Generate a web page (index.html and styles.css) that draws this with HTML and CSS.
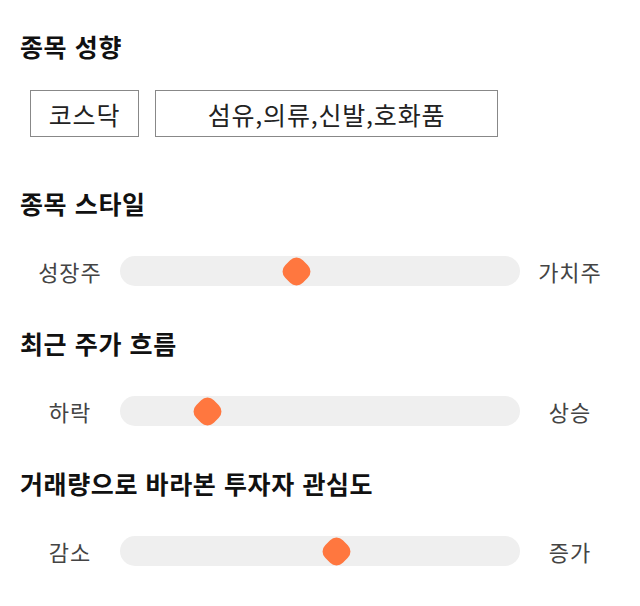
FILE: index.html
```html
<!DOCTYPE html>
<html lang="ko">
<head>
<meta charset="utf-8">
<link rel="stylesheet" href="styles.css">
</head>
<body>
<div class="page">
  <h2 class="title">종목 성향</h2>
  <div class="tags">
    <div class="tag tag-market">코스닥</div>
    <div class="tag tag-sector">섬유,의류,신발,호화품</div>
  </div>

  <section class="section first">
    <h2 class="title">종목 스타일</h2>
    <div class="slider-row">
      <span class="label">성장주</span>
      <div class="track"><span class="thumb" style="left:176px"></span></div>
      <span class="label">가치주</span>
    </div>
  </section>

  <section class="section">
    <h2 class="title">최근 주가 흐름</h2>
    <div class="slider-row">
      <span class="label">하락</span>
      <div class="track"><span class="thumb" style="left:87px"></span></div>
      <span class="label">상승</span>
    </div>
  </section>

  <section class="section">
    <h2 class="title">거래량으로 바라본 투자자 관심도</h2>
    <div class="slider-row">
      <span class="label">감소</span>
      <div class="track"><span class="thumb" style="left:216px"></span></div>
      <span class="label">증가</span>
    </div>
  </section>
</div>
</body>
</html>
```

FILE: styles.css
```css
* { box-sizing: border-box; }
html, body {
  margin: 0;
  padding: 0;
  background: #fff;
}
body {
  font-family: "Noto Sans CJK KR", "Noto Sans", sans-serif;
  color: #111;
}
.page {
  width: 640px;
  padding-top: 30px;
}
.title {
  margin: 0 0 0 20px;
  font-size: 25px;
  font-weight: 700;
  letter-spacing: 0.6px;
  line-height: 32px;
  color: #111;
}
.tags {
  display: flex;
  gap: 16px;
  margin: 28px 0 0 30px;
}
.tag {
  height: 47px;
  border: 1px solid #888;
  display: flex;
  align-items: center;
  justify-content: center;
  font-size: 25px;
  letter-spacing: 0.8px;
  color: #222;
}
.tag-market { width: 109px; }
.tag-sector { width: 343px; }
.section { margin-top: 41px; }
.section.first { margin-top: 50px; }
.slider-row {
  display: flex;
  align-items: center;
  margin-top: 37px;
  padding: 0 20px;
  height: 30px;
}
.label {
  width: 100px;
  text-align: center;
  font-size: 22px;
  letter-spacing: 1px;
  color: #444;
  line-height: 30px;
}
.track {
  position: relative;
  width: 400px;
  height: 30px;
  border-radius: 15px;
  background: #efefef;
}
.thumb {
  position: absolute;
  top: 50%;
  width: 25px;
  height: 25px;
  margin: -12.5px 0 0 -12.5px;
  background: #ff773f;
  border-radius: 9px;
  transform: rotate(45deg);
}
```
